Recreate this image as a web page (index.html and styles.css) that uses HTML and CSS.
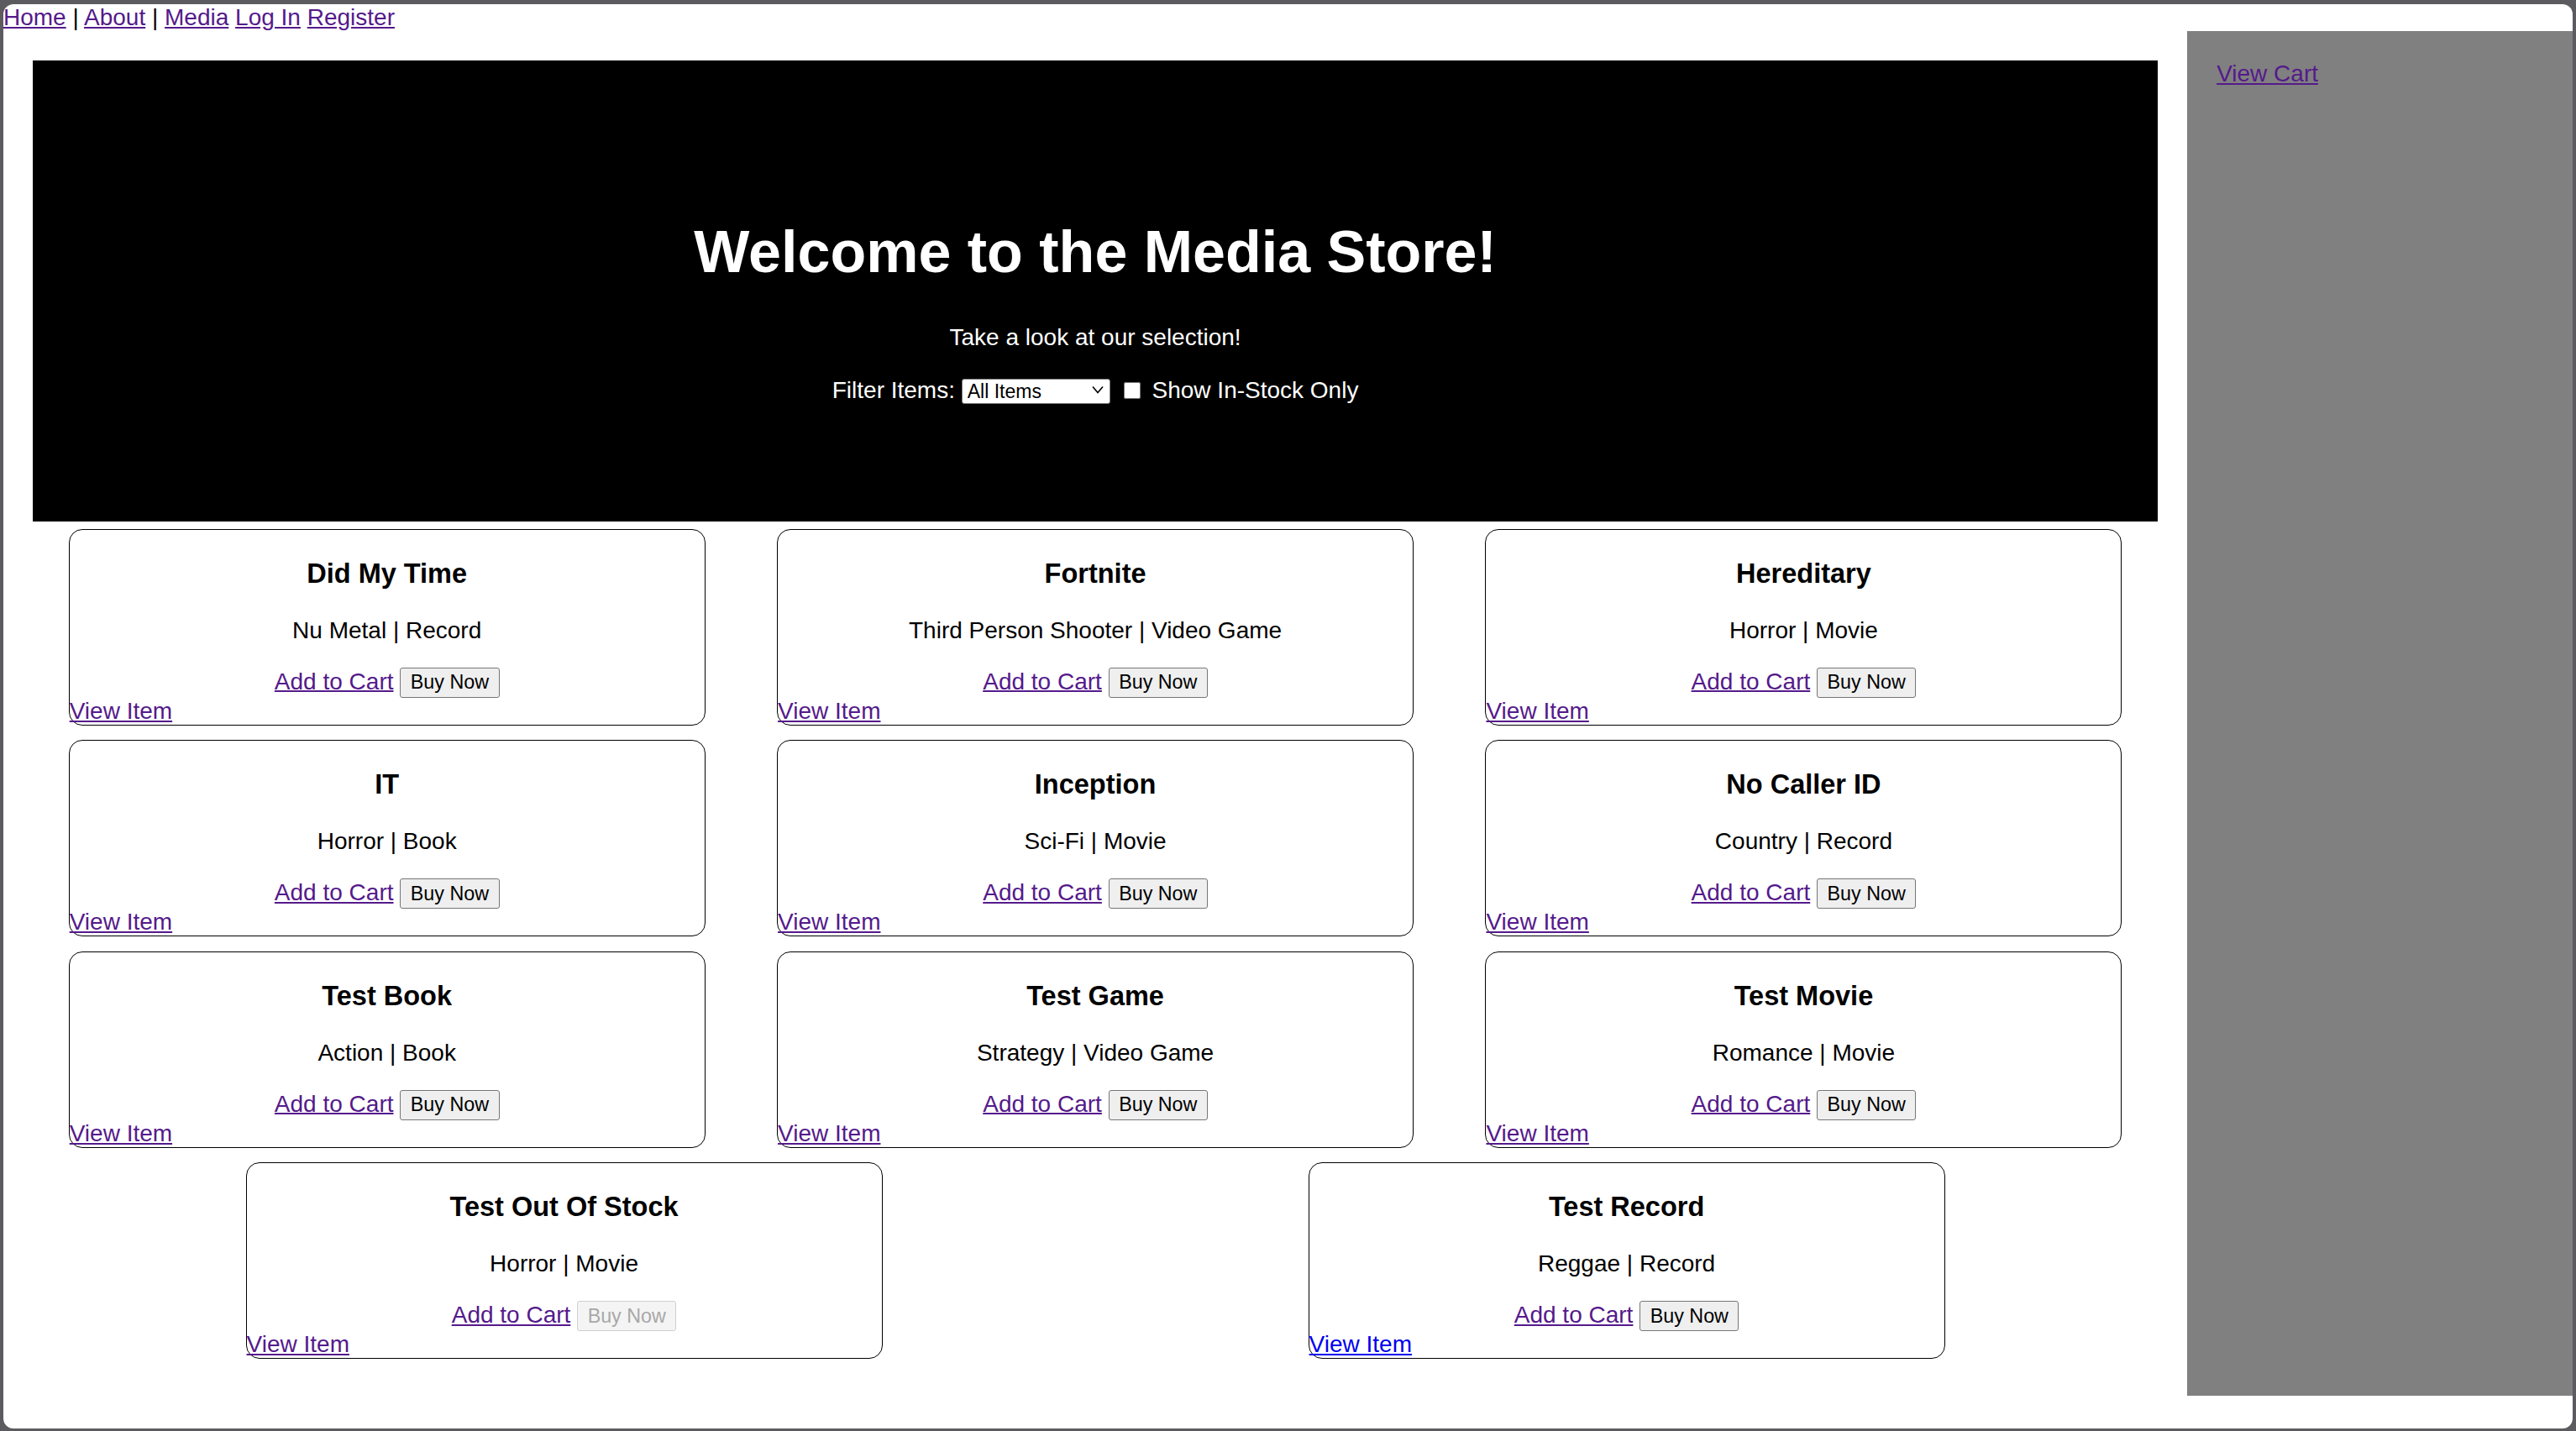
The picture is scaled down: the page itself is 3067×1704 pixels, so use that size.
FILE: index.html
```html
<!DOCTYPE html>
<html lang="en">
<head>
<meta charset="utf-8">
<title>Media Store</title>
<link rel="stylesheet" href="styles.css">
</head>
<body>
<div class="window">
  <nav class="topnav"><a href="#" class="visited">Home</a> | <a href="#" class="visited">About</a> | <a href="#" class="visited">Media</a> <a href="#" class="visited">Log In</a> <a href="#" class="visited">Register</a></nav>
  <div class="layout">
    <main class="main">
      <section class="hero">
        <h1 class="hero-title">Welcome to the Media Store!</h1>
        <p class="hero-sub">Take a look at our selection!</p>
        <div class="hero-filter">Filter Items: <span class="select-wrap"><select class="filter-select"><option>All Items</option><option>Books</option><option>Movies</option><option>Records</option><option>Video Games</option></select><svg class="chev" viewBox="0 0 14 10" width="14" height="10"><path d="M1 1.5 L7 8.5 L13 1.5" fill="none" stroke="#000" stroke-width="1.6"/></svg></span> <input type="checkbox" class="stock-check" id="instock"><label for="instock">Show In-Stock Only</label></div>
      </section>
      <section class="cards">
        <div class="card">
          <h3 class="card-title">Did My Time</h3>
          <p class="card-meta">Nu Metal | Record</p>
          <div class="card-actions"><a href="#" class="visited">Add to Cart</a> <button class="buy">Buy Now</button></div>
          <a href="#" class="view visited">View Item</a>
        </div>
        <div class="card">
          <h3 class="card-title">Fortnite</h3>
          <p class="card-meta">Third Person Shooter | Video Game</p>
          <div class="card-actions"><a href="#" class="visited">Add to Cart</a> <button class="buy">Buy Now</button></div>
          <a href="#" class="view visited">View Item</a>
        </div>
        <div class="card">
          <h3 class="card-title">Hereditary</h3>
          <p class="card-meta">Horror | Movie</p>
          <div class="card-actions"><a href="#" class="visited">Add to Cart</a> <button class="buy">Buy Now</button></div>
          <a href="#" class="view visited">View Item</a>
        </div>
        <div class="card">
          <h3 class="card-title">IT</h3>
          <p class="card-meta">Horror | Book</p>
          <div class="card-actions"><a href="#" class="visited">Add to Cart</a> <button class="buy">Buy Now</button></div>
          <a href="#" class="view visited">View Item</a>
        </div>
        <div class="card">
          <h3 class="card-title">Inception</h3>
          <p class="card-meta">Sci-Fi | Movie</p>
          <div class="card-actions"><a href="#" class="visited">Add to Cart</a> <button class="buy">Buy Now</button></div>
          <a href="#" class="view visited">View Item</a>
        </div>
        <div class="card">
          <h3 class="card-title">No Caller ID</h3>
          <p class="card-meta">Country | Record</p>
          <div class="card-actions"><a href="#" class="visited">Add to Cart</a> <button class="buy">Buy Now</button></div>
          <a href="#" class="view visited">View Item</a>
        </div>
        <div class="card">
          <h3 class="card-title">Test Book</h3>
          <p class="card-meta">Action | Book</p>
          <div class="card-actions"><a href="#" class="visited">Add to Cart</a> <button class="buy">Buy Now</button></div>
          <a href="#" class="view visited">View Item</a>
        </div>
        <div class="card">
          <h3 class="card-title">Test Game</h3>
          <p class="card-meta">Strategy | Video Game</p>
          <div class="card-actions"><a href="#" class="visited">Add to Cart</a> <button class="buy">Buy Now</button></div>
          <a href="#" class="view visited">View Item</a>
        </div>
        <div class="card">
          <h3 class="card-title">Test Movie</h3>
          <p class="card-meta">Romance | Movie</p>
          <div class="card-actions"><a href="#" class="visited">Add to Cart</a> <button class="buy">Buy Now</button></div>
          <a href="#" class="view visited">View Item</a>
        </div>
        <div class="card">
          <h3 class="card-title">Test Out Of Stock</h3>
          <p class="card-meta">Horror | Movie</p>
          <div class="card-actions"><a href="#" class="visited">Add to Cart</a> <button class="buy" disabled>Buy Now</button></div>
          <a href="#" class="view visited">View Item</a>
        </div>
        <div class="card">
          <h3 class="card-title">Test Record</h3>
          <p class="card-meta">Reggae | Record</p>
          <div class="card-actions"><a href="#" class="visited">Add to Cart</a> <button class="buy">Buy Now</button></div>
          <a href="#" class="view">View Item</a>
        </div>
      </section>
    </main>
    <aside class="sidebar">
      <a href="#" class="visited">View Cart</a>
    </aside>
  </div>
</div>
</body>
</html>
```
FILE: styles.css
```css
html, body {
  margin: 0;
  padding: 0;
}
body {
  background: #5b5b60;
  font-family: "Liberation Sans", Arial, sans-serif;
  font-size: 28px;
  color: #000;
  padding: 5px 4px 3px 4px;
  height: 1704px;
  box-sizing: border-box;
  overflow: hidden;
}
.window {
  background: #fff;
  height: 1696px;
  border-radius: 12px;
  overflow: hidden;
}
a {
  color: #0000ee;
  text-decoration: underline;
}
a.visited {
  color: #551a8b;
}
.topnav {
  line-height: 32px;
  height: 32px;
  white-space: nowrap;
}
.layout {
  display: flex;
  align-items: stretch;
}
.main {
  flex: 0 0 85%;
  box-sizing: border-box;
  padding: 35px;
}
.sidebar {
  flex: 1 1 auto;
  background: #808080;
  padding: 35px;
  line-height: 32px;
}
.hero {
  background: #000;
  color: #fff;
  height: 549px;
  box-sizing: border-box;
  padding-top: 188px;
  text-align: center;
}
.hero-title {
  margin: 0;
  font-size: 70px;
  line-height: 80px;
  font-weight: bold;
}
.hero-sub {
  margin: 46px 0 0;
  line-height: 32px;
}
.hero-filter {
  margin-top: 31px;
  line-height: 32px;
}
.select-wrap {
  position: relative;
  display: inline-block;
}
.filter-select {
  -webkit-appearance: none;
  appearance: none;
  font-family: "Liberation Sans", Arial, sans-serif;
  font-size: 23px;
  width: 177px;
  height: 30px;
  padding: 0 24px 0 6px;
  vertical-align: baseline;
  background: #fff;
  color: #000;
  border: 1px solid #767676;
  border-radius: 3px;
}
.chev {
  position: absolute;
  right: 8px;
  top: 10px;
  pointer-events: none;
}
.stock-check {
  width: 20px;
  height: 20px;
  margin: 0 14px 0 8px;
  vertical-align: -1px;
}
.cards {
  display: flex;
  flex-wrap: wrap;
  justify-content: space-around;
}
.card {
  position: relative;
  width: 758px;
  height: 234px;
  box-sizing: border-box;
  margin: 8.75px 0;
  border: 1px solid #000;
  border-radius: 16px;
  text-align: center;
}
.card-title {
  margin: 34px 0 32.5px;
  font-size: 32.5px;
  line-height: 37.5px;
  font-weight: bold;
}
.card-meta {
  margin: 0 0 28px;
  line-height: 32px;
}
.card-actions {
  line-height: 32px;
}
.buy {
  font-family: "Liberation Sans", Arial, sans-serif;
  font-size: 23.3px;
  height: 36px;
  padding: 0 11.5px;
  background: #efefef;
  color: #000;
  border: 1px solid #767676;
  border-radius: 3px;
  vertical-align: baseline;
}
.buy:disabled {
  background: #f4f4f4;
  color: #a8a8a8;
  border-color: #cfcfcf;
}
.view {
  position: absolute;
  left: 0;
  bottom: 0;
  line-height: 32px;
}
```
